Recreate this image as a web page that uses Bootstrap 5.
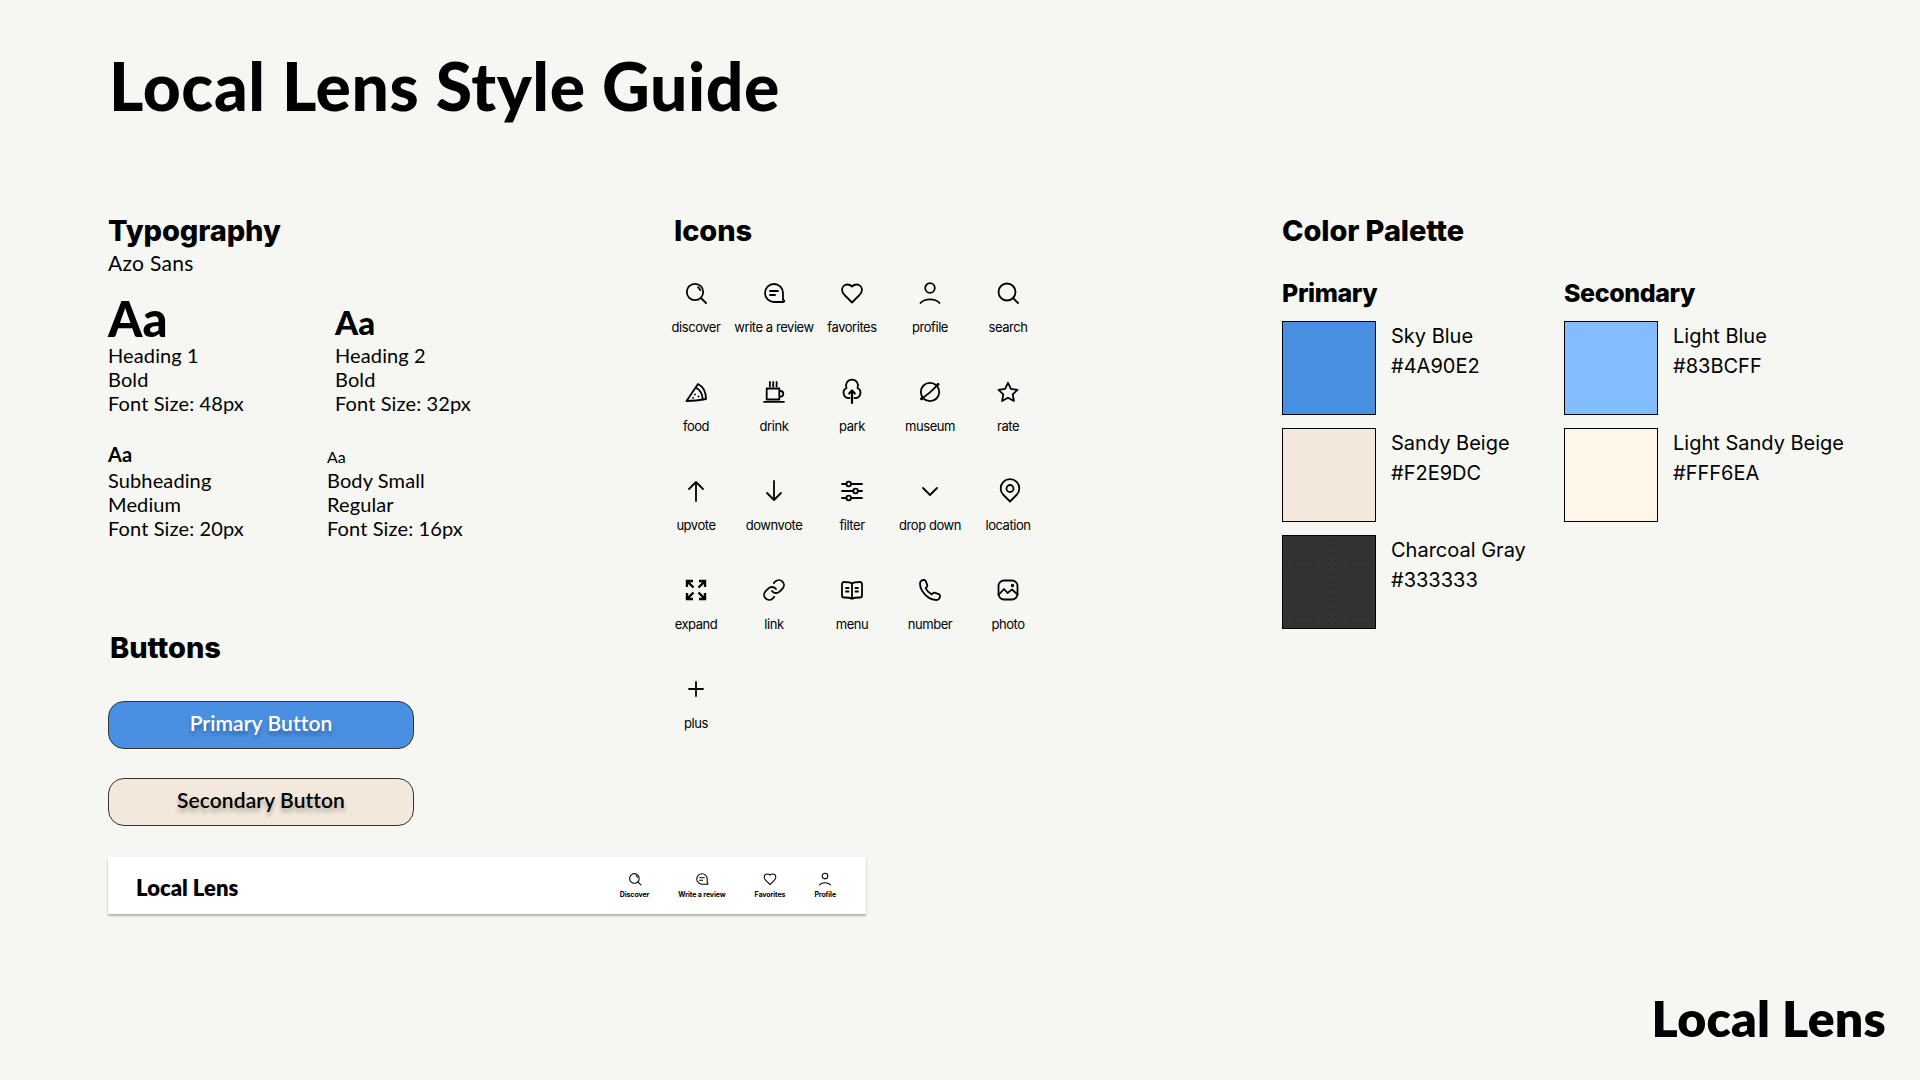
<!DOCTYPE html>
<html lang="en"><head><meta charset="utf-8"><title>Local Lens Style Guide</title>
<link href="https://cdn.jsdelivr.net/npm/bootstrap@5.3.0/dist/css/bootstrap.min.css" rel="stylesheet">
<style>
html,body{margin:0;background:#f6f7f3}
body{font-family:"Lato","Liberation Sans",sans-serif;color:#000}
.guide{height:1080px;overflow:hidden;padding:0 34px 0 108px}
.ttl{font:900 66px/80px "Lato",sans-serif;margin:46px 0 0 1px;letter-spacing:.6px}
.cols{margin-top:87px}
.col-type{width:566px}
.col-icons{width:608px}
.hd{font:800 29px/36px "Inter",sans-serif;letter-spacing:-.1px;margin:0}
.azo{font-size:21px;line-height:24px;letter-spacing:.3px;margin:2px 0 18px}
.row-a{width:227px}.row-b{width:219px}
.spec{font-size:20px;line-height:24px;letter-spacing:.12px}
.aa1{font:900 49px/50px "Lato",sans-serif}
.aa2{font:900 33px/42px "Lato",sans-serif}
.aa3{font:700 20px/27px "Lato",sans-serif}
.aa4{font:400 16px/23px "Lato",sans-serif}
.typ2{margin-top:26px}
.btn-hd{margin:90px 0 0 2px}
.gbtn{width:306px;height:48px;border-radius:16px;border:1px solid #333;font:600 21px/1 "Lato",sans-serif;letter-spacing:.1px;text-shadow:0 4px 4px rgba(0,0,0,.3);display:flex;align-items:center;justify-content:center;padding:0 0 5px}
.gb1{background:#4a90e2;color:#fff;margin-top:35px}
.gb2{background:#f2e9dc;color:#000;margin-top:29px}
.gb1:hover{background:#4a90e2;color:#fff}.gb2:hover{background:#f2e9dc;color:#000}
.gnav{width:758px;height:57px;background:#fff;box-shadow:0 2px 2px rgba(0,0,0,.28);margin-top:31px;padding:0 30px 0 28px}
.gbrand{font:800 22px/1 "Lato",sans-serif;color:#000;padding-top:5px}
.nitems{gap:29px;padding-bottom:1px}
.nitem{display:flex;flex-direction:column;align-items:center;font:700 7px/9px "Inter",sans-serif;letter-spacing:-.1px;color:#000;white-space:nowrap}
.nitem svg{width:14px;height:14px;margin-bottom:4px}
.igrid{display:grid;grid-template-columns:repeat(5,78px);grid-auto-rows:99px;margin:32px 0 0 -17px}
.icell{display:flex;flex-direction:column;align-items:center;font:400 13px/16px "Inter",sans-serif;letter-spacing:-.45px;white-space:nowrap}
.icell svg{width:24px;height:24px;margin-bottom:14px;overflow:visible}
.ic{fill:none;stroke:#000;stroke-width:1.8;stroke-linecap:round;stroke-linejoin:round}
.pal-hd{font:800 25px/32px "Inter",sans-serif;letter-spacing:-.4px;margin:28px 0 12px}
.pcol1{width:282px}
.sw{width:94px;height:94px;border:1px solid #000;flex:none}
.sw-row{height:107px;gap:15px;font:400 20px/30px "Inter",sans-serif;white-space:nowrap}
.dots{background-color:#333;background-image:radial-gradient(circle,#222 .7px,transparent 1px);background-size:7px 7px}
.foot{font:800 50px/60px "Lato",sans-serif;letter-spacing:.2px;position:absolute;right:34px;top:988px}
</style></head><body>
<svg width="0" height="0" class="position-absolute"><defs>
<symbol id="i-discover" viewBox="0 0 24 24"><circle cx="11" cy="11" r="8.2"/><path d="M17 17l5 5M14 6.2a5.5 5.5 0 0 1 2.2 3"/></symbol>
<symbol id="i-search" viewBox="0 0 24 24"><circle cx="11" cy="11" r="8.5"/><path d="M17 17l5 5"/></symbol>
<symbol id="i-review" viewBox="0 0 24 24"><path d="M12 3a9 9 0 1 0 0 18h9.500a1 1 0 0 0-.5-2v-7a9 9 0 0 0-9-9z"/><path d="M8 10h8M8 14h5"/></symbol>
<symbol id="i-heart" viewBox="0 0 24 24"><path d="M19.500 14c1.400-1.500 2.500-3.200 2.500-5.500A5.500 5.500 0 0 0 16.500 3.500c-1.800 0-3 .5-4.500 2-1.500-1.500-2.700-2-4.500-2A5.500 5.500 0 0 0 2 8.500c0 2.300 1.100 4 2.500 5.500l7.500 7.500z"/></symbol>
<symbol id="i-profile" viewBox="0 0 24 24"><circle cx="12" cy="7" r="4.800"/><path d="M2.500 22c2.500-2.600 5.800-3.600 9.500-3.600s7 1 9.500 3.600"/></symbol>
<symbol id="i-food" viewBox="0 0 24 24"><path d="M2.500 21L14 4c5 2.500 8 8.500 8 15-6 1.200-13 2-19.500 2z"/><path d="M12.500 8c3.500 2 6 6.500 6.300 11.500"/><path d="M11 14.500h.01M14.500 16.500h.01M9 18h.01"/></symbol>
<symbol id="i-drink" viewBox="0 0 24 24"><path d="M4.700 8.500h12.600v11H4.700zM17.300 11h1.200a2.800 2.800 0 0 1 0 5.600h-1.200M2 21.800h20"/><path d="M8 6.500c-1-1.300.8-2.600-.2-4.500M11.300 6.500c-1-1.300.8-2.600-.2-4.500M14.700 6.500c-1-1.300.8-2.600-.2-4.500"/></symbol>
<symbol id="i-park" viewBox="0 0 24 24" overflow="visible"><path stroke-width="2.200" d="M12 23V10.500M9.200 13.500l2.800-3 2.800 3"/><path d="M9.500 18A5.300 5.300 0 0 1 6.500 8 6 6 0 1 1 17.500 8 5.300 5.300 0 0 1 14.500 18"/></symbol>
<symbol id="i-museum" viewBox="0 0 24 24"><circle cx="12" cy="12" r="9.200"/><path d="M3.500 18.500C8 16 16 9.500 20 4"/><circle cx="20" cy="4.500" r=".6"/><circle cx="3.600" cy="18.800" r=".6"/></symbol>
<symbol id="i-star" viewBox="0 0 24 24"><path d="M12 2.800l2.900 6.100 6.600.9-4.800 4.600 1.200 6.600-5.900-3.200L6.100 21l1.200-6.600L2.500 9.800l6.600-.9z"/></symbol>
<symbol id="i-up" viewBox="0 0 24 24"><path d="M12 22V3M5 10l7-7 7 7"/></symbol>
<symbol id="i-down" viewBox="0 0 24 24"><path d="M12 2v19M5 14l7 7 7-7"/></symbol>
<symbol id="i-filter" viewBox="0 0 24 24"><path d="M2 5h4.500M11 5h11M2 12h11M18 12h4M2 19h4.500M11 19h11"/><circle cx="8.700" cy="5" r="2.300"/><circle cx="15.600" cy="12" r="2.300"/><circle cx="8.700" cy="19" r="2.300"/></symbol>
<symbol id="i-chev" viewBox="0 0 24 24"><path d="M5 9l7 7 7-7"/></symbol>
<symbol id="i-pin" viewBox="-2 0 24 24" overflow="visible"><path d="M12 22.500L5.500 16a9.300 9.300 0 1 1 13 0z"/><circle cx="12" cy="9.500" r="3.500"/></symbol>
<symbol id="i-expand" viewBox="0 0 24 24"><g stroke-width="2.400" stroke-linecap="butt" stroke-linejoin="miter"><path d="M3 9V3h6M3.500 3.500L9.500 9.500M21 9V3h-6M20.500 3.500L14.500 9.500M3 15v6h6M3.500 20.500L9.500 14.500M21 15v6h-6M20.500 20.500L14.500 14.500"/></g></symbol>
<symbol id="i-link" viewBox="0 0 24 24"><path d="M10 13a5 5 0 0 0 7.540.54l3-3a5 5 0 0 0-7.070-7.070l-1.720 1.710"/><path d="M14 11a5 5 0 0 0-7.540-.54l-3 3a5 5 0 0 0 7.070 7.070l1.710-1.710"/></symbol>
<symbol id="i-menu" viewBox="0 0 24 24"><path d="M12 5.500C10.200 4 8 4 4 4a2 2 0 0 0-2 2v11.500a2 2 0 0 0 2 2c3.500 0 6 0 8 1.300 2-1.300 4.500-1.300 8-1.300a2 2 0 0 0 2-2V6a2 2 0 0 0-2-2c-4 0-6.200 0-8 1.500zM12 5.500v15.300"/><path d="M6 10h2.500M6 13.500h2.500M15.500 10H18M15.500 13.500H18"/></symbol>
<symbol id="i-phone" viewBox="0 0 24 24"><path d="M22 18.500c0 1.500-1.500 3.500-3.500 3.500C10 22 2 13 2 5.500 2 3.500 3.700 2 5.500 2h.5c.8 0 1.500.5 1.800 1.200l1.400 3.600c.3.800.1 1.500-.4 2.100L7.600 10.200c1.300 2.800 3.400 4.900 6.200 6.200l1.300-1.200c.6-.5 1.400-.7 2.100-.4l3.600 1.400c.7.300 1.200 1 1.200 1.800z"/></symbol>
<symbol id="i-photo" viewBox="0 0 24 24"><rect x="2.500" y="2.500" width="19" height="19" rx="5.500"/><path d="M2.500 17l5.500-6 3.500 4 4.500-3.500 5.500 5"/><circle cx="16.500" cy="7.500" r=".8"/></symbol>
<symbol id="i-plus" viewBox="0 0 24 24"><path d="M12 5v14M5 12h14"/></symbol>
</defs></svg>
<main class="guide position-relative">
<h1 class="ttl">Local Lens Style Guide</h1>
<div class="cols d-flex">
<section class="col-type">
<h2 class="hd">Typography</h2>
<div class="azo">Azo Sans</div>
<div class="d-flex align-items-end">
<div class="row-a"><div class="aa1">Aa</div><div class="spec">Heading 1<br>Bold<br>Font Size: 48px</div></div>
<div><div class="aa2">Aa</div><div class="spec">Heading 2<br>Bold<br>Font Size: 32px</div></div>
</div>
<div class="d-flex align-items-end typ2">
<div class="row-b"><div class="aa3">Aa</div><div class="spec">Subheading<br>Medium<br>Font Size: 20px</div></div>
<div><div class="aa4">Aa</div><div class="spec">Body Small<br>Regular<br>Font Size: 16px</div></div>
</div>
<h2 class="hd btn-hd">Buttons</h2>
<button class="btn gbtn gb1">Primary Button</button>
<button class="btn gbtn gb2">Secondary Button</button>
<nav class="navbar gnav flex-nowrap">
<span class="gbrand">Local Lens</span>
<div class="d-flex nitems">
<div class="nitem"><svg class="ic"><use href="#i-discover"/></svg>Discover</div>
<div class="nitem"><svg class="ic"><use href="#i-review"/></svg>Write a review</div>
<div class="nitem"><svg class="ic"><use href="#i-heart"/></svg>Favorites</div>
<div class="nitem"><svg class="ic"><use href="#i-profile"/></svg>Profile</div>
</div>
</nav>
</section>
<section class="col-icons">
<h2 class="hd">Icons</h2>
<div class="igrid">
<div class="icell"><svg class="ic"><use href="#i-discover"/></svg>discover</div>
<div class="icell"><svg class="ic"><use href="#i-review"/></svg>write a review</div>
<div class="icell"><svg class="ic"><use href="#i-heart"/></svg>favorites</div>
<div class="icell"><svg class="ic"><use href="#i-profile"/></svg>profile</div>
<div class="icell"><svg class="ic"><use href="#i-search"/></svg>search</div>
<div class="icell"><svg class="ic"><use href="#i-food"/></svg>food</div>
<div class="icell"><svg class="ic"><use href="#i-drink"/></svg>drink</div>
<div class="icell"><svg class="ic"><use href="#i-park"/></svg>park</div>
<div class="icell"><svg class="ic"><use href="#i-museum"/></svg>museum</div>
<div class="icell"><svg class="ic"><use href="#i-star"/></svg>rate</div>
<div class="icell"><svg class="ic"><use href="#i-up"/></svg>upvote</div>
<div class="icell"><svg class="ic"><use href="#i-down"/></svg>downvote</div>
<div class="icell"><svg class="ic"><use href="#i-filter"/></svg>filter</div>
<div class="icell"><svg class="ic"><use href="#i-chev"/></svg>drop down</div>
<div class="icell"><svg class="ic"><use href="#i-pin"/></svg>location</div>
<div class="icell"><svg class="ic"><use href="#i-expand"/></svg>expand</div>
<div class="icell"><svg class="ic"><use href="#i-link"/></svg>link</div>
<div class="icell"><svg class="ic"><use href="#i-menu"/></svg>menu</div>
<div class="icell"><svg class="ic"><use href="#i-phone"/></svg>number</div>
<div class="icell"><svg class="ic"><use href="#i-photo"/></svg>photo</div>
<div class="icell"><svg class="ic"><use href="#i-plus"/></svg>plus</div>
</div>
</section>
<section>
<h2 class="hd">Color Palette</h2>
<div class="d-flex">
<div class="pcol1">
<h3 class="pal-hd">Primary</h3>
<div class="d-flex sw-row"><div class="sw" style="background:#4a90e2"></div><div>Sky Blue<br>#4A90E2</div></div>
<div class="d-flex sw-row"><div class="sw" style="background:#f2e9dc"></div><div>Sandy Beige<br>#F2E9DC</div></div>
<div class="d-flex sw-row"><div class="sw dots"></div><div>Charcoal Gray<br>#333333</div></div>
</div>
<div>
<h3 class="pal-hd">Secondary</h3>
<div class="d-flex sw-row"><div class="sw" style="background:#83bcff"></div><div>Light Blue<br>#83BCFF</div></div>
<div class="d-flex sw-row"><div class="sw" style="background:#fff6ea"></div><div>Light Sandy Beige<br>#FFF6EA</div></div>
</div>
</div>
</section>
</div>
<div class="foot">Local Lens</div>
</main>
</body></html>
